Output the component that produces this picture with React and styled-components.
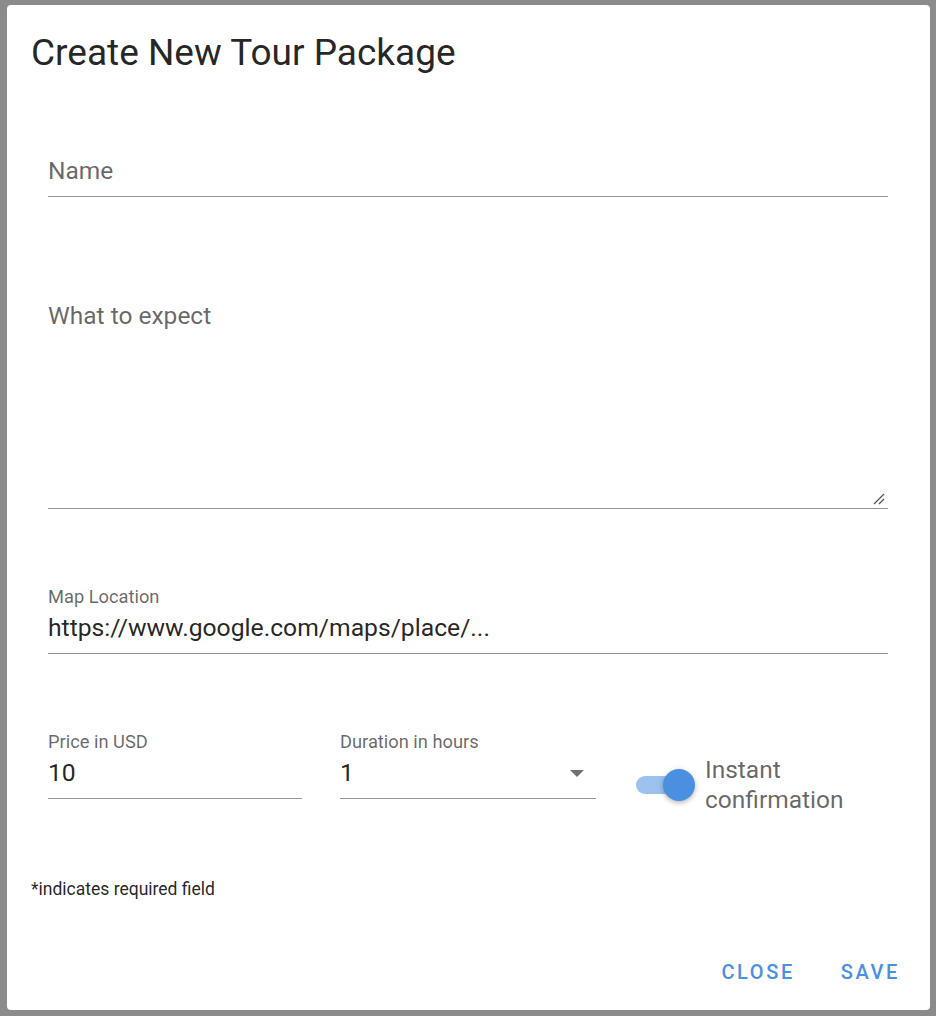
import React from "react";
import styled, { createGlobalStyle } from "styled-components";

const GlobalStyle = createGlobalStyle`
  html, body {
    margin: 0;
    padding: 0;
    background: #8b8b8b;
    font-family: Roboto, "Liberation Sans", Arial, sans-serif;
  }
  * { box-sizing: border-box; }
`;

const Page = styled.div`
  padding: 5px 6px 6px 7px;
  height: 1016px;
`;

const Dialog = styled.div`
  background: #fff;
  border-radius: 4px;
  height: 1005px;
  display: flex;
  flex-direction: column;
`;

const Title = styled.h2`
  margin: 0;
  padding: 28px 24px 0;
  font-size: 37px;
  font-weight: 400;
  line-height: 40px;
  color: rgba(0, 0, 0, 0.87);
`;

const Form = styled.div`
  padding: 0 42px 0 41px;
  display: flex;
  flex-direction: column;
`;

const Field = styled.div`
  position: relative;
  flex: none;
  margin-top: ${(p) => p.$top || 0}px;
  width: ${(p) => (p.$width ? `${p.$width}px` : "auto")};
  height: ${(p) => (p.$height ? `${p.$height}px` : "auto")};
  padding-bottom: 10px;
  border-bottom: 1px solid #949494;
  display: flex;
  flex-direction: column;
`;

const Placeholder = styled.div`
  font-size: 24.5px;
  line-height: 30px;
  color: rgba(0, 0, 0, 0.6);
`;

const SmallLabel = styled.div`
  font-size: 18.3px;
  line-height: 20px;
  color: rgba(0, 0, 0, 0.6);
  margin-bottom: 6px;
`;

const ValueRow = styled.div`
  display: flex;
  align-items: center;
  justify-content: space-between;
`;

const Value = styled.div`
  font-size: 24.7px;
  line-height: 30px;
  color: rgba(0, 0, 0, 0.87);
`;

const Arrow = styled.span`
  width: 0;
  height: 0;
  border-left: 7px solid transparent;
  border-right: 7px solid transparent;
  border-top: 7px solid #707070;
  margin-right: 12px;
`;

const ResizeHandle = styled.svg`
  position: absolute;
  right: 2px;
  bottom: 2px;
`;

const Row = styled.div`
  margin-top: 78px;
  display: flex;
  align-items: flex-start;
  gap: 38px;
`;

const SwitchGroup = styled.div`
  display: flex;
  align-items: center;
  gap: 9px;
  margin-left: 2px;
  margin-top: 23px;
`;

const SwitchBox = styled.div`
  position: relative;
  width: 60px;
  height: 32px;
`;

const Track = styled.div`
  position: absolute;
  left: 0;
  top: 7px;
  width: 50px;
  height: 18px;
  border-radius: 9px;
  background: rgba(74, 144, 226, 0.55);
`;

const Thumb = styled.div`
  position: absolute;
  right: 1px;
  top: 0;
  width: 32px;
  height: 32px;
  border-radius: 50%;
  background: #4a8fe0;
  box-shadow: 0 2px 4px rgba(0, 0, 0, 0.2), 0 1px 8px rgba(0, 0, 0, 0.1);
`;

const SwitchLabel = styled.div`
  font-size: 24.5px;
  line-height: 30px;
  color: rgba(0, 0, 0, 0.6);
`;

const Caption = styled.div`
  margin-top: 62px;
  padding: 0 24px;
  font-size: 17.5px;
  line-height: 24px;
  color: rgba(0, 0, 0, 0.87);
`;

const Actions = styled.div`
  margin-top: 51px;
  display: flex;
  justify-content: flex-end;
  gap: 14px;
  padding-right: 14px;
`;

const Button = styled.button`
  height: 40px;
  padding: 0 16px;
  border: none;
  background: transparent;
  font-family: Roboto, "Liberation Sans", Arial, sans-serif;
  font-size: 20px;
  font-weight: 500;
  letter-spacing: 2.6px;
  color: #4a8fe0;
  text-transform: uppercase;
  cursor: pointer;
`;

export default function App() {
  return (
    <>
      <GlobalStyle />
      <Page>
        <Dialog>
          <Title>Create New Tour Package</Title>
          <Form>
            <Field $top={83}>
              <Placeholder>Name</Placeholder>
            </Field>
            <Field $top={104} $height={208}>
              <Placeholder>What to expect</Placeholder>
              <ResizeHandle width="14" height="14" viewBox="0 0 14 14">
                <line x1="2" y1="12" x2="12" y2="2" stroke="#555" strokeWidth="1.2" />
                <line x1="7" y1="12" x2="12" y2="7" stroke="#555" strokeWidth="1.2" />
              </ResizeHandle>
            </Field>
            <Field $top={78}>
              <SmallLabel>Map Location</SmallLabel>
              <Value>https://www.google.com/maps/place/...</Value>
            </Field>
            <Row>
              <Field $width={254}>
                <SmallLabel>Price in USD</SmallLabel>
                <Value>10</Value>
              </Field>
              <Field $width={256}>
                <SmallLabel>Duration in hours</SmallLabel>
                <ValueRow>
                  <Value>1</Value>
                  <Arrow />
                </ValueRow>
              </Field>
              <SwitchGroup>
                <SwitchBox>
                  <Track />
                  <Thumb />
                </SwitchBox>
                <SwitchLabel>
                  Instant
                  <br />
                  confirmation
                </SwitchLabel>
              </SwitchGroup>
            </Row>
          </Form>
          <Caption>*indicates required field</Caption>
          <Actions>
            <Button>Close</Button>
            <Button>Save</Button>
          </Actions>
        </Dialog>
      </Page>
    </>
  );
}
